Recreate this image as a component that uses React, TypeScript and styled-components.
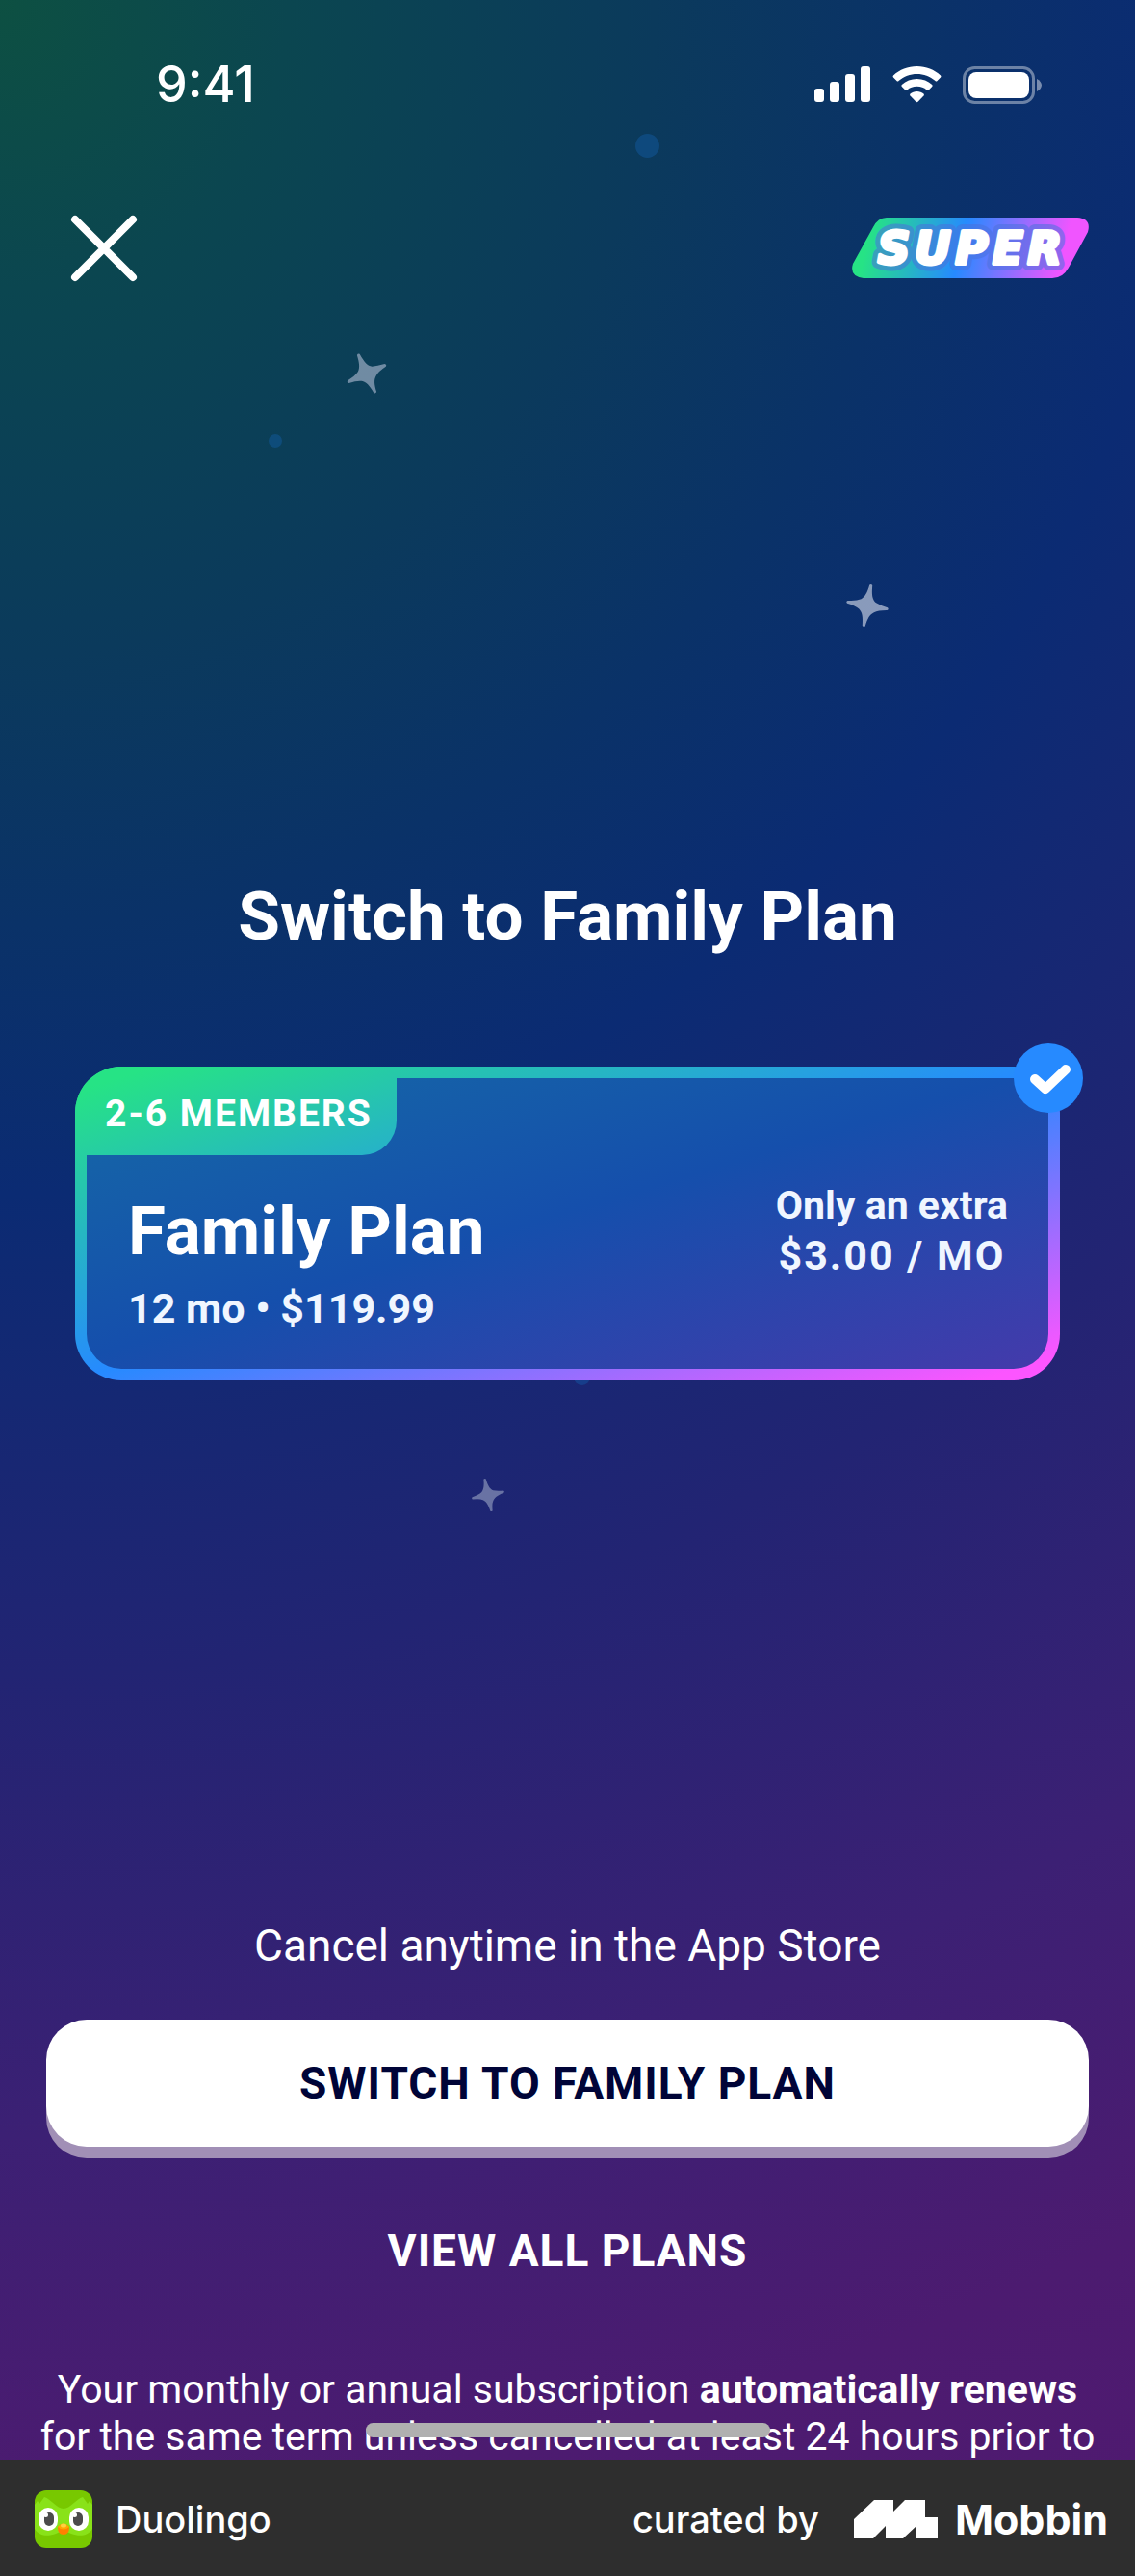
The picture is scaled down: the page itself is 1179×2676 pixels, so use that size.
import React from "react";
import styled, { createGlobalStyle, css } from "styled-components";

const Global = createGlobalStyle`
  * { box-sizing: border-box; }
  body { margin: 0; background: #2e2e2e; }
  button { font: inherit; border: 0; background: none; padding: 0; cursor: pointer; }
`;

const sans = `Roboto, "Open Sans", sans-serif`;
const superGradient = "linear-gradient(to bottom right, #26e385 4%, #268aff 50%, #fc55ff 96%)";

const headingText = css`
  font: 700 71px/80px ${sans};
`;

const buttonText = css`
  font: 700 46px/60px ${sans};
  letter-spacing: 1px;
`;

const Page = styled.div`
  min-height: 100vh;
  display: flex;
  flex-direction: column;
  color: #fff;
  font-family: ${sans};
`;

const Screen = styled.main`
  position: relative;
  flex: 1;
  display: flex;
  flex-direction: column;
  overflow: hidden;
  background: radial-gradient(
    circle at 0 0,
    #0d5042 0,
    #0b4650 300px,
    #0b3a5c 680px,
    #0a3268 960px,
    #0b2b73 1240px,
    #222473 1740px,
    #3c2074 2220px,
    #4c1b70 2600px,
    #4f1a70 2850px
  );
`;

const Sky = styled.div`
  position: absolute;
  inset: 0;
  pointer-events: none;
`;

const Dot = styled.span<{ $x: number; $y: number; $size: number; $fade: number }>`
  position: absolute;
  left: ${(p) => p.$x}px;
  top: ${(p) => p.$y}px;
  width: ${(p) => p.$size}px;
  height: ${(p) => p.$size}px;
  border-radius: 50%;
  background: #1562b0;
  opacity: ${(p) => p.$fade};
`;

const StarShape = styled.svg<{ $x: number; $y: number; $turn: number; $fade: number }>`
  position: absolute;
  left: ${(p) => p.$x}px;
  top: ${(p) => p.$y}px;
  opacity: ${(p) => p.$fade};
  transform: rotate(${(p) => p.$turn}deg);
`;

const StatusBar = styled.header`
  display: flex;
  justify-content: space-between;
  align-items: center;
  height: 176px;
  padding: 0 97px 0 162px;
`;

const Clock = styled.time`
  font: 500 52px/60px Inter, "Liberation Sans", sans-serif;
`;

const StatusIcons = styled.div`
  display: flex;
  align-items: center;
  gap: 22px;
`;

const TopBar = styled.div`
  display: flex;
  justify-content: space-between;
  align-items: center;
  height: 164px;
  padding: 0 48px 0 72px;
`;

const CloseButton = styled.button`
  display: flex;
`;

const Title = styled.h1`
  ${headingText}
  margin: 572px 0 0;
  text-align: center;
`;

const PlanCard = styled.section`
  position: relative;
  margin: 116px 78px 0;
  min-height: 326px;
  padding: 12px;
  border-radius: 48px;
  background: ${superGradient};
`;

const PlanBody = styled.div`
  min-height: 302px;
  display: flex;
  justify-content: space-between;
  border-radius: 36px;
  padding: 106px 42px 0 43px;
  background: linear-gradient(to bottom right, #1569a6 0%, #154fac 48%, #443aab 100%);
`;

const PlanTag = styled.span`
  position: absolute;
  inset: 0;
  padding: 5px 0 0 31px;
  background: ${superGradient};
  clip-path: inset(0 calc(100% - 334px) calc(100% - 92px) 0 round 48px 0 36px 0);
  font: 700 39px/88px ${sans};
  letter-spacing: 2px;
  white-space: nowrap;
`;

const PlanInfo = styled.div`
  display: flex;
  flex-direction: column;
  padding-top: 13px;
`;

const PlanName = styled.h2`
  ${headingText}
  margin: 0;
`;

const PlanTerm = styled.p`
  margin: 0;
  color: #f0f6ff;
  font: 700 43px/80px ${sans};
`;

const PlanPrice = styled.div`
  display: flex;
  flex-direction: column;
  align-items: center;
  color: #f0f6ff;
  font: 700 41px/52px ${sans};
`;

const PriceValue = styled.span`
  font-size: 43px;
  letter-spacing: 2px;
`;

const CheckBadge = styled.svg`
  position: absolute;
  right: -24px;
  top: -24px;
`;

const Actions = styled.div`
  margin-top: auto;
  display: flex;
  flex-direction: column;
  align-items: center;
  padding: 0 48px;
`;

const Note = styled.p`
  margin: 0;
  font: 400 46px/60px ${sans};
`;

const PrimaryButton = styled.button`
  align-self: stretch;
  height: 132px;
  margin-top: 47px;
  border-radius: 42px;
  background: #fff;
  box-shadow: 0 12px 0 #a18fb6;
  color: #000437;
  && {
    ${buttonText}
  }
`;

const TextButton = styled.button`
  margin-top: 78px;
  color: #fff;
  && {
    ${buttonText}
  }
`;

const Legal = styled.p`
  margin: 90px 0 0;
  text-align: center;
  font: 400 41px/49px ${sans};
`;

const HomeIndicator = styled.span`
  position: absolute;
  left: 50%;
  bottom: 24px;
  width: 420px;
  height: 15px;
  border-radius: 8px;
  background: #b0b0b0;
  transform: translateX(-50%);
`;

const Credit = styled.footer`
  display: flex;
  align-items: center;
  height: 120px;
  padding: 2px 28px 0 36px;
  background: #2e2e2e;
  font: 500 38px/48px Inter, "Liberation Sans", sans-serif;
`;

const AppName = styled.span`
  margin-left: 24px;
  margin-right: auto;
`;

const Brand = styled.a`
  display: flex;
  align-items: center;
  gap: 18px;
  margin-left: 36px;
  color: #fff;
  text-decoration: none;
  font-size: 43px;
  font-weight: 700;
`;

function Star({ x, y, size, turn, fade }: { x: number; y: number; size: number; turn: number; fade: number }) {
  return (
    <StarShape $x={x} $y={y} $turn={turn} $fade={fade} width={size} height={size} viewBox="0 0 46 46" aria-hidden="true">
      <path
        d="M21.500 1.500Q23 0 24.500 1.500C25.500 12 27 16 31 18.500Q36 20.500 44 21.500Q46 23 44 24.500Q35 26 31 29C27 32 25.500 36 24.500 44.500Q23 46 21.500 44.500C20.500 35 19 31 15 28Q11 25.500 2 24.500Q0 23 2 21.500Q11 20.500 15.500 17.500C19 14.500 20.500 10 21.500 1.500Z"
        fill="#b4bfd6"
      />
    </StarShape>
  );
}

function SignalIcon() {
  return (
    <svg width="59" height="38" viewBox="0 0 59 38" fill="#fff" aria-label="Signal">
      <rect x="0" y="23" width="10" height="14" rx="3" />
      <rect x="16" y="16" width="10" height="21" rx="3" />
      <rect x="32" y="8" width="10" height="29" rx="3" />
      <rect x="48" y="0" width="10" height="37" rx="3" />
    </svg>
  );
}

function WifiIcon() {
  return (
    <svg width="51" height="38" viewBox="0 0 51 38" fill="#fff" aria-label="Wi-Fi">
      <path d="M25.500 0C35 0 43.500 3.500 50 9.500Q51 10.500 50 11.500L46.500 15Q45.500 16 44.500 15C39 10.500 32.500 8 25.500 8S12 10.500 6.500 15Q5.500 16 4.500 15L1 11.500Q0 10.500 1 9.500C7.500 3.500 16 0 25.500 0Z" />
      <path d="M25.500 13C31.500 13 37 15.200 41.200 19Q42.200 20 41.200 21L37.700 24.500Q36.700 25.500 35.700 24.500C33 22 29.500 20.800 25.500 20.800S18 22 15.300 24.500Q14.300 25.500 13.300 24.500L9.800 21Q8.800 20 9.800 19C14 15.200 19.500 13 25.500 13Z" />
      <path d="M25.500 26C28.200 26 30.600 26.900 32.500 28.500Q33.400 29.500 32.500 30.500L26.500 36.800Q25.500 37.700 24.500 36.800L18.500 30.500Q17.600 29.500 18.500 28.500C20.400 26.900 22.800 26 25.500 26Z" />
    </svg>
  );
}

function BatteryIcon() {
  return (
    <svg width="82" height="39" viewBox="0 0 82 39" aria-label="Battery">
      <rect x="1.500" y="1.500" width="72" height="36" rx="11" fill="none" stroke="#fff" strokeOpacity="0.4" strokeWidth="3" />
      <rect x="6" y="6" width="63" height="27" rx="8" fill="#fff" />
      <path d="M77 13C80 14.500 82 17 82 19.500S80 24.500 77 26Z" fill="#fff" fillOpacity="0.45" />
    </svg>
  );
}

const SuperWord = styled.text`
  font: italic 700 46px "DejaVu Sans", sans-serif;
  letter-spacing: 5px;
  stroke-linejoin: round;
`;

function SuperBadge() {
  return (
    <svg width="248" height="64" viewBox="0 0 248 64" role="img" aria-label="Super">
      <defs>
        <linearGradient id="superFill" x1="10" y1="0" x2="232" y2="54" gradientUnits="userSpaceOnUse">
          <stop offset="0.060" stopColor="#26e385" />
          <stop offset="0.480" stopColor="#268aff" />
          <stop offset="0.940" stopColor="#f055ff" />
        </linearGradient>
      </defs>
      <path d="M38 0H236Q251 1 247 15L227 52Q221 63 210 63H14Q-1 61 3 48L24 10Q29 0 38 0Z" fill="url(#superFill)" />
      <SuperWord x="29" y="48" fill="#4a72dd" stroke="#4a72dd" strokeWidth="14" opacity="0.55" aria-hidden="true">
        SUPER
      </SuperWord>
      <SuperWord x="29" y="48" fill="#fff" stroke="#fff" strokeWidth="4">
        SUPER
      </SuperWord>
    </svg>
  );
}

function OwlIcon() {
  return (
    <svg width="60" height="60" viewBox="0 0 60 60" role="img" aria-label="Duolingo logo">
      <rect width="60" height="60" rx="12" fill="#78c800" />
      <path d="M0 15L3 11L5 14L10 7C17 9 23 19 30 19S43 9 50 7L55 14L57 11L60 15V40C55 48 46 48 38 45Q30 40 22 45C14 48 5 48 0 40Z" fill="#89e219" />
      <rect x="4" y="18" width="20" height="24" rx="10" fill="#fff" />
      <rect x="36" y="18" width="20" height="24" rx="10" fill="#fff" />
      <rect x="10" y="23" width="10" height="14" rx="5" fill="#4b4b4b" />
      <rect x="40" y="23" width="10" height="14" rx="5" fill="#4b4b4b" />
      <circle cx="11.500" cy="25.500" r="2.500" fill="#fff" />
      <circle cx="41.500" cy="25.500" r="2.500" fill="#fff" />
      <path d="M24 38Q30 31 36 38Q36 46 30 46T24 38Z" fill="#ff8000" />
      <path d="M24 38Q30 31 36 38Q30 43 24 38Z" fill="#ffa800" />
      <ellipse cx="30" cy="36.500" rx="3" ry="2" fill="#ffd040" />
    </svg>
  );
}

export default function App() {
  return (
    <Page>
      <Global />
      <Screen>
        <Sky>
          <Dot $x={660} $y={139} $size={25} $fade={0.4} />
          <Dot $x={279} $y={451} $size={14} $fade={0.4} />
          <Dot $x={596} $y={1422} $size={17} $fade={0.4} />
          <Star x={358} y={365} size={46} turn={-24} fade={0.6} />
          <Star x={878} y={606} size={46} turn={10} fade={0.75} />
          <Star x={489} y={1535} size={36} turn={-12} fade={0.5} />
        </Sky>
        <StatusBar>
          <Clock>9:41</Clock>
          <StatusIcons>
            <SignalIcon />
            <WifiIcon />
            <BatteryIcon />
          </StatusIcons>
        </StatusBar>
        <TopBar>
          <CloseButton aria-label="Close">
            <svg width="72" height="72" viewBox="0 0 72 72" stroke="#fff" strokeWidth="8" strokeLinecap="round" aria-hidden="true">
              <path d="M6 6L66 66M66 6L6 66" />
            </svg>
          </CloseButton>
          <SuperBadge />
        </TopBar>
        <Title>Switch to Family Plan</Title>
        <PlanCard>
          <PlanBody>
            <PlanInfo>
              <PlanName>Family Plan</PlanName>
              <PlanTerm>12 mo • $119.99</PlanTerm>
            </PlanInfo>
            <PlanPrice>
              <span>Only an extra</span>
              <PriceValue>$3.00 / MO</PriceValue>
            </PlanPrice>
          </PlanBody>
          <PlanTag>2-6 MEMBERS</PlanTag>
          <CheckBadge width="72" height="72" viewBox="0 0 72 72" aria-label="Selected">
            <circle cx="36" cy="36" r="36" fill="#268aff" />
            <path d="M22 37L33 47L54 27" fill="none" stroke="#fff" strokeWidth="10" strokeLinecap="round" strokeLinejoin="round" />
          </CheckBadge>
        </PlanCard>
        <Actions>
          <Note>Cancel anytime in the App Store</Note>
          <PrimaryButton>SWITCH TO FAMILY PLAN</PrimaryButton>
          <TextButton>VIEW ALL PLANS</TextButton>
        </Actions>
        <Legal>
          Your monthly or annual subscription <strong>automatically renews</strong>
          <br />
          for the same term unless cancelled at least 24 hours prior to
        </Legal>
        <HomeIndicator />
      </Screen>
      <Credit>
        <OwlIcon />
        <AppName>Duolingo</AppName>
        <span>curated by</span>
        <Brand href="#mobbin">
          <svg width="87" height="40" viewBox="0 0 87 40" fill="#fff" aria-hidden="true">
            <path d="M0 40V20L21 0H41V12L53 0H74V18H87V40H65V27L51 40H33V27L20 40Z" />
          </svg>
          Mobbin
        </Brand>
      </Credit>
    </Page>
  );
}
